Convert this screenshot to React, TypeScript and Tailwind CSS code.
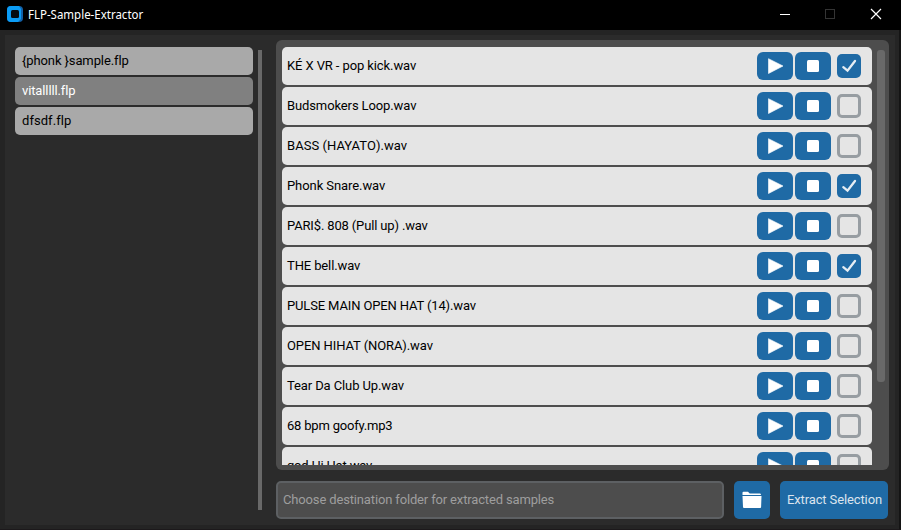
const projects = [
  { name: '{phonk }sample.flp', selected: false, tracking: 'tracking-[-0.11px]' },
  { name: 'vitalllll.flp', selected: true, tracking: 'tracking-[-0.12px]' },
  { name: 'dfsdf.flp', selected: false, tracking: 'tracking-[0.05px]' },
];

const samples = [
  { name: 'KÉ X VR - pop kick.wav', checked: true, tracking: 'tracking-[-0.1px]' },
  { name: 'Budsmokers Loop.wav', checked: false, tracking: 'tracking-[-0.11px]' },
  { name: 'BASS (HAYATO).wav', checked: false, tracking: 'tracking-[0.05px]' },
  { name: 'Phonk Snare.wav', checked: true, tracking: 'tracking-[-0.08px]' },
  { name: 'PARI$. 808 (Pull up) .wav', checked: false, tracking: 'tracking-[-0.15px]' },
  { name: 'THE bell.wav', checked: true, tracking: 'tracking-[-0.12px]' },
  { name: 'PULSE MAIN OPEN HAT (14).wav', checked: false, tracking: 'tracking-[-0.14px]' },
  { name: 'OPEN HIHAT (NORA).wav', checked: false, tracking: 'tracking-[-0.09px]' },
  { name: 'Tear Da Club Up.wav', checked: false, tracking: 'tracking-[-0.11px]' },
  { name: '68 bpm goofy.mp3', checked: false, tracking: 'tracking-[-0.2px]' },
  { name: 'god Hi Hat.wav', checked: false, tracking: 'tracking-[-0.2px]' },
];

function TitleBar() {
  return (
    <header className="flex h-[30px] shrink-0 items-center bg-black pl-[7px] pr-[19px] text-white">
      <svg width="16" height="16" viewBox="0 0 16 16" className="-mt-[2px]">
        <rect width="16" height="16" rx="4" fill="#1261a8" />
        <path d="M4 0h8l2 3v10l-3 3H4a4 4 0 0 1-4-4V4a4 4 0 0 1 4-4z" fill="#0b9cf5" />
        <rect x="4" y="4" width="8" height="8" rx="1.5" fill="#050b12" />
      </svg>
      <h1 className="ml-[5px] font-['Noto_Sans',sans-serif] text-[12px] leading-4">
        <span className="inline-block origin-left scale-x-[0.957] whitespace-nowrap">FLP-Sample-Extractor</span>
      </h1>
      <svg width="102" height="12" viewBox="0 0 102 12" fill="none" className="ml-auto -mt-[2px]">
        <path d="M0 6.5h10" stroke="#fff" />
        <rect x="45.5" y="1.5" width="9" height="9" stroke="#343434" />
        <path d="M91 1l10 10M101 1L91 11" stroke="#fff" strokeWidth="1.2" />
      </svg>
    </header>
  );
}

function CheckBox({ checked }: { checked: boolean }) {
  return checked ? (
    <span className="ml-[6px] flex size-6 items-center justify-center rounded-[5px] bg-[#1f6aa5]">
      <svg width="24" height="24" viewBox="0 0 24 24" fill="none">
        <path d="M6.3 13.2l4.2 3.4L18 7" stroke="#e5edf3" strokeWidth="2.3" strokeLinecap="round" />
      </svg>
    </span>
  ) : (
    <span className="ml-[6px] size-6 rounded-[5px] border-[3px] border-[#979da2]" />
  );
}

function SampleRow({ name, checked, tracking }: { name: string; checked: boolean; tracking: string }) {
  return (
    <li className="flex h-[38px] shrink-0 items-center rounded-[5px] bg-[#e5e5e5] pl-[5px] pr-[11px] text-black">
      <span className={`mr-auto leading-4 ${tracking}`}>{name}</span>
      <button className="flex h-7 w-9 items-center justify-center rounded-[6px] bg-[#1f6aa5]">
        <svg width="36" height="28" viewBox="0 0 36 28">
          <path d="M11.5 6.7v14.8L26 14z" fill="#fff" stroke="#fff" strokeWidth="0.6" strokeLinejoin="round" />
        </svg>
      </button>
      <button className="ml-[2px] flex h-7 w-9 items-center justify-center rounded-[6px] bg-[#1f6aa5]">
        <span className="size-3 rounded-[1.5px] bg-white" />
      </button>
      <CheckBox checked={checked} />
    </li>
  );
}

export default function App() {
  return (
    <div className="flex h-[530px] w-[901px] flex-col overflow-hidden bg-[#242424] font-[Roboto,sans-serif] text-[13px]">
      <TitleBar />
      <div className="flex min-h-0 flex-1 border-b border-r-2 border-b-[#1c191b] border-r-[#141414] pb-1 pl-[5px] pr-[4px] pt-[5px]">
        <main className="flex min-w-0 flex-1 bg-[#2b2b2b]">
          <aside className="flex w-[257px] shrink-0 justify-between pl-[10px]">
            <ul className="flex w-[238px] flex-col gap-[2px] pt-3">
              {projects.map((p) => (
                <li
                  key={p.name}
                  className={`flex h-7 items-center rounded-[5px] pl-[7px] leading-4 ${p.tracking} ${
                    p.selected ? 'bg-[#808080] text-white' : 'bg-[#a9a9a9] text-black'
                  }`}
                >
                  {p.name}
                </li>
              ))}
            </ul>
            <div className="mt-[15px] h-[460px] w-1 bg-[#696969]" />
          </aside>
          <section className="ml-[14px] mt-[5px] w-[613px]">
            <div className="flex h-[430px] rounded-[6px] bg-[#4d4d4d] pl-[6px] pr-1 pt-[7px]">
              <ul className="flex h-[418px] w-[590px] flex-col gap-[2px] overflow-hidden">
                {samples.map((s) => (
                  <SampleRow key={s.name} {...s} />
                ))}
              </ul>
              <div className="ml-auto mt-[3px] h-[332px] w-2 rounded-[3px] bg-[#696969]" />
            </div>
            <div className="mt-[11px] flex h-[38px]">
              <input
                className="w-[448px] rounded-[5px] border-2 border-[#5d6063] bg-[#4d4d4d] px-[5px] tracking-[-0.15px] text-white placeholder:text-[#9e9e9e]"
                placeholder="Choose destination folder for extracted samples"
              />
              <button className="ml-[10px] flex w-9 items-center justify-center rounded-[5px] bg-[#1f6aa5]">
                <svg width="20" height="18" viewBox="0 0 20 18" fill="#fff">
                  <path d="M.5 4V1.8Q.5.8 1.5.8H6l1.7 1.6h10.2q1 0 1 1V4z" />
                  <path d="M.5 5h19l-.4 11q0 1-1 1H2q-1 0-1-1z" />
                </svg>
              </button>
              <button className="ml-[10px] w-[108px] whitespace-nowrap rounded-[5px] bg-[#1f6aa5] pl-px tracking-[-0.12px] text-[#dce4ee]">
                Extract Selection
              </button>
            </div>
          </section>
        </main>
      </div>
    </div>
  );
}
